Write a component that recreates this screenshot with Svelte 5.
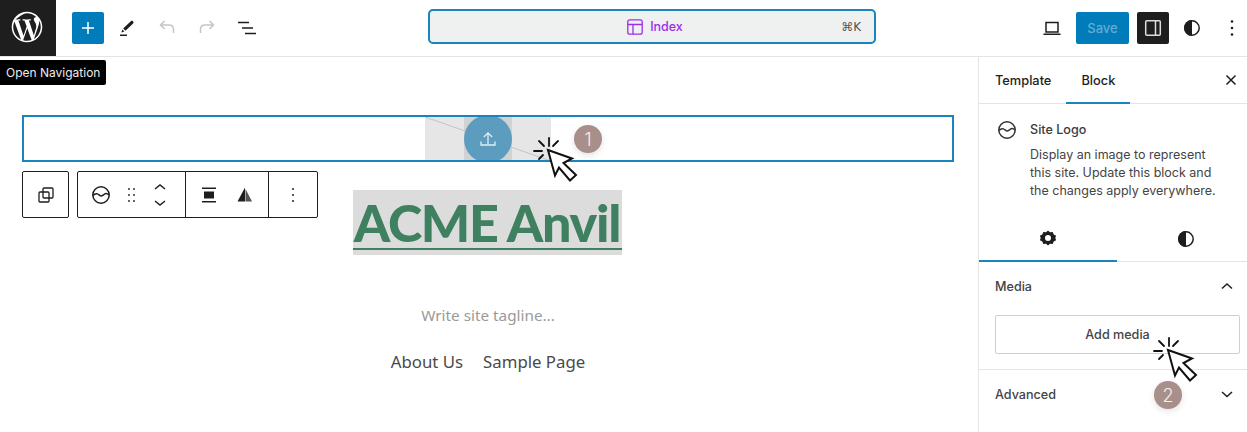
<script lang="ts">
  const tagline = 'Write site tagline...'
  const navLinks = ['About Us', 'Sample Page']
  const description = 'Display an image to represent this site. Update this block and the changes apply everywhere.'
</script>

{#snippet logoIcon()}
  <svg width="24" height="24" viewBox="0 0 24 24" fill="none" stroke="currentColor" stroke-width="1.5">
    <circle cx="12" cy="12" r="8.2" />
    <path d="M4 12.5c1.6-1.6 3-2.2 4.4-1.6 1.6.7 2.4 2 4 2 1.500 0 2.600-1.600 3.800-2.200 1.200-.5 2.400 0 3.800 1.300" />
  </svg>
{/snippet}

{#snippet halfCircle(size)}
  <svg width={size} height={size} viewBox="0 0 24 24">
    <circle cx="12" cy="12" r="7.2" fill="none" stroke="currentColor" stroke-width="1.5" />
    <path d="M12 4a8 8 0 0 0 0 16z" fill="currentColor" />
  </svg>
{/snippet}

{#snippet cursor(cls)}
  <svg class="cursor {cls}" width="48" height="52" viewBox="-16 -14 48 52" fill="none">
    <g stroke="#111" stroke-width="1.8" stroke-linecap="round">
      <path d="M1 -12v8M-9 -9l5 5M-14 1h8M-9 9l4-4M10 -9l-5 5" />
    </g>
    <path d="M0 0L24 8.500L15.500 13L28 25L22 30.500L11 17.500L7 25.500Z" fill="#fff" stroke="#111" stroke-width="2" stroke-linejoin="miter" />
  </svg>
{/snippet}

<div class="app">
  <header class="topbar">
    <div class="left">
      <div class="wp-logo">
        <svg width="36" height="36" viewBox="0 0 80 80">
          <path fill="#fff" d="M40 6C21.300 6 6 21.300 6 40s15.300 34 34 34 34-15.300 34-34S58.700 6 40 6zM9.400 40c0-4.400 1-8.700 2.700-12.500l14.600 40C16.500 62.500 9.400 52.100 9.400 40zM40 70.600c-3 0-5.900-.4-8.600-1.200l9.200-26.700 9.400 25.800c.1.100.1.300.2.400-3.200 1.100-6.600 1.700-10.200 1.700zm4.200-44.900c1.800-.1 3.500-.3 3.500-.3 1.700-.2 1.500-2.600-.2-2.500 0 0-5 .4-8.200.4-3 0-8.100-.4-8.100-.4-1.700-.1-1.900 2.400-.2 2.500 0 0 1.600.2 3.300.3l4.900 13.400-6.900 20.600-11.400-34c1.800-.1 3.500-.3 3.500-.3 1.700-.2 1.500-2.600-.2-2.500 0 0-5 .4-8.200.4h-2C24 16.900 31.500 9.400 40 9.400c8 0 15.300 3.100 20.700 8.100h-.4c-3 0-5.200 2.600-5.200 5.500 0 2.500 1.500 4.700 3 7.200 1.200 2 2.500 4.700 2.500 8.500 0 2.600-1 5.700-2.300 9.900l-3 10.100zm11.200 40.800l9.300-27c1.700-4.300 2.300-7.800 2.300-10.900 0-1.100-.1-2.100-.2-3.100 2.400 4.300 3.700 9.300 3.700 14.500 0 11.300-6.100 21.100-15.100 26.500z" />
        </svg>
      </div>
      <button class="inserter" aria-label="Add block">
        <svg width="24" height="24" viewBox="0 0 24 24" fill="none" stroke="#fff" stroke-width="1.500"><path d="M12 6v12M6 12h12" /></svg>
      </button>
      <div class="tools">
        <svg class="tool" width="24" height="24" viewBox="0 0 24 24"><path fill="#1e1e1e" d="M10.500 14.800l-2.300-2.300 7.600-7.300c.6-.6 1.500-.6 2.100 0l.2.200c.6.600.6 1.500 0 2.100l-7.600 7.300zM7.400 13.500l2 2-3 .9zM5 18.500h7V20H5z" /></svg>
        <svg class="tool muted" width="24" height="24" viewBox="0 0 24 24" fill="none" stroke="#c5c5c5" stroke-width="1.500"><path d="M9.500 5L5.500 9l4 4M5.500 9h8.500c2.700 0 4.500 1.800 4.500 4.500V17" /></svg>
        <svg class="tool muted" width="24" height="24" viewBox="0 0 24 24" fill="none" stroke="#c5c5c5" stroke-width="1.500"><path d="M14.500 5l4 4-4 4M18.500 9H10c-2.700 0-4.500 1.800-4.500 4.500V17" /></svg>
        <svg class="tool" width="24" height="24" viewBox="0 0 24 24" fill="none" stroke="#1e1e1e" stroke-width="1.500"><path d="M3 6.500h11M7 12h11M10 17.500h11" /></svg>
      </div>
    </div>

    <div class="command-bar">
      <div class="doc-title">
        <svg width="20" height="20" viewBox="0 0 20 20" fill="none" stroke="#9b2fe8" stroke-width="1.300">
          <rect x="2.800" y="2.800" width="14.400" height="14.400" rx="2" />
          <path d="M2.800 7.500h14.400M8 7.500v9.700" />
        </svg>
        <span>Index</span>
      </div>
      <span class="shortcut">⌘K</span>
    </div>

    <div class="right">
      <svg class="view" width="24" height="24" viewBox="0 0 24 24" fill="none" stroke="#1e1e1e" stroke-width="1.500"><path d="M6 6.500h12v9.500H6zM3.500 18.200h17" /></svg>
      <button class="save">Save</button>
      <button class="panel-toggle" aria-label="Settings">
        <svg width="24" height="24" viewBox="0 0 24 24" fill="none" stroke="#ddd" stroke-width="1.500"><rect x="4.700" y="4.700" width="14.600" height="14.600" rx="1" /><path d="M14.500 5v14" /></svg>
      </button>
      <div class="styles-icon">{@render halfCircle(24)}</div>
      <svg class="more" width="24" height="24" viewBox="0 0 24 24" fill="#1e1e1e"><circle cx="12" cy="5.500" r="1.300" /><circle cx="12" cy="12" r="1.300" /><circle cx="12" cy="18.500" r="1.300" /></svg>
    </div>
  </header>

  <div class="tooltip">Open Navigation</div>

  <div class="body">
    <main class="canvas">
      <div class="logo-block">
        <div class="placeholder">
          <svg class="diagonal" width="126" height="44" viewBox="0 0 126 44"><path d="M0 0L126 44" stroke="#c4c4c4" stroke-width="1" /></svg>
          <div class="placeholder-mid"></div>
          <div class="upload">
            <svg width="24" height="24" viewBox="0 0 24 24" fill="none" stroke="#e4eef3" stroke-width="1.300"><path d="M12 17V6M7.800 10L12 5.800 16.200 10M5 14.500v3.500h14v-3.500" /></svg>
          </div>
        </div>
      </div>

      <div class="site-title"><span>ACME Anvil</span></div>
      <p class="tagline">{tagline}</p>
      <nav class="site-nav">
        {#each navLinks as link}
          <span>{link}</span>
        {/each}
      </nav>

      <div class="block-toolbar">
        <div class="tb-group single">
          <svg width="24" height="24" viewBox="0 0 24 24" fill="none" stroke="#1e1e1e" stroke-width="1.300"><rect x="9" y="5" width="10" height="10" rx="1" /><rect x="5" y="9" width="10" height="10" rx="1" /></svg>
        </div>
        <div class="tb-group">
          <div class="tb-section first">
            <span class="tb-logo">{@render logoIcon()}</span>
            <svg width="24" height="24" viewBox="0 0 24 24" fill="#333"><circle cx="10" cy="6" r="1" /><circle cx="15" cy="6" r="1" /><circle cx="10" cy="12" r="1" /><circle cx="15" cy="12" r="1" /><circle cx="10" cy="18" r="1" /><circle cx="15" cy="18" r="1" /></svg>
            <svg class="mover" width="24" height="36" viewBox="0 0 24 36" fill="none" stroke="#1e1e1e" stroke-width="1.500"><path d="M7 12l5-4 5 4M7 24l5 4 5-4" /></svg>
          </div>
          <div class="tb-section second">
            <svg width="24" height="24" viewBox="0 0 24 24" fill="#1e1e1e"><path d="M5 4.500h14V6H5zM5 18h14v1.500H5zM7 8.500h10v7H7z" /></svg>
            <svg width="24" height="24" viewBox="0 0 24 24"><path d="M12 4.500L4.500 18.500H12z" fill="#1e1e1e" /><path d="M12.500 6l6.500 12.500h-6.500z" fill="#555" /></svg>
          </div>
          <div class="tb-section third">
            <svg width="24" height="24" viewBox="0 0 24 24" fill="#333"><circle cx="12" cy="6" r="1.100" /><circle cx="12" cy="12" r="1.100" /><circle cx="12" cy="18" r="1.100" /></svg>
          </div>
        </div>
      </div>
    </main>

    <aside class="sidebar">
      <div class="tabs">
        <span class="tab">Template</span>
        <span class="tab active">Block</span>
        <svg class="close" width="20" height="20" viewBox="0 0 20 20" fill="none" stroke="#1e1e1e" stroke-width="1.500"><path d="M5.500 5.500l9 9M14.500 5.500l-9 9" /></svg>
      </div>

      <div class="block-card">
        <span class="card-icon">{@render logoIcon()}</span>
        <div>
          <h2>Site Logo</h2>
          <p>{description}</p>
        </div>
      </div>

      <div class="inspector-tabs">
        <div class="itab active">
          <svg width="24" height="24" viewBox="0 0 24 24"><path fill="#1e1e1e" fill-rule="evenodd" d="M12 4.500l2 1.800 2.700-.4 1 2.500 2.400 1.300-.8 2.300.8 2.300-2.400 1.300-1 2.500-2.700-.4-2 1.800-2-1.800-2.700.4-1-2.500-2.400-1.300.8-2.300-.8-2.300 2.400-1.300 1-2.500 2.700.4zM12 9a3 3 0 1 0 0 6 3 3 0 0 0 0-6z" /></svg>
        </div>
        <div class="itab second">{@render halfCircle(24)}</div>
      </div>

      <section class="panel media">
        <div class="panel-head">
          <span>Media</span>
          <svg width="24" height="24" viewBox="0 0 24 24" fill="none" stroke="#1e1e1e" stroke-width="1.500"><path d="M7 14.500l5-4.500 5 4.500" /></svg>
        </div>
        <button class="add-media">Add media</button>
      </section>

      <section class="panel">
        <div class="panel-head">
          <span>Advanced</span>
          <svg width="24" height="24" viewBox="0 0 24 24" fill="none" stroke="#1e1e1e" stroke-width="1.500"><path d="M7 10l5 4.500 5-4.500" /></svg>
        </div>
      </section>
    </aside>
  </div>

  {@render cursor('c1')}
  {@render cursor('c2')}
  <div class="badge b1">1</div>
  <div class="badge b2">2</div>
</div>

<style>
  :global(body) {
    margin: 0;
    background: #fff;
  }

  .app {
    position: relative;
    display: flex;
    flex-direction: column;
    width: 1247px;
    height: 432px;
    overflow: hidden;
    font-family: Inter, "Liberation Sans", sans-serif;
    color: #1e1e1e;
    background: #fff;
  }

  button {
    font-family: inherit;
    padding: 0;
  }

  svg {
    display: block;
    flex-shrink: 0;
  }

  /* top bar */
  .topbar {
    display: grid;
    grid-template-columns: 428px 448px 1fr;
    height: 56px;
    flex-shrink: 0;
    border-bottom: 1px solid #e4e4e4;
  }

  .left {
    display: flex;
    align-items: center;
  }

  .wp-logo {
    display: flex;
    align-items: center;
    justify-content: center;
    box-sizing: border-box;
    width: 56px;
    height: 56px;
    padding: 0 2px 2px 0;
    background: #1e1e1e;
    margin-right: 16px;
  }

  .inserter {
    display: flex;
    align-items: center;
    justify-content: center;
    width: 32px;
    height: 32px;
    border: 0;
    border-radius: 2px;
    background: #007cba;
  }

  .tools {
    display: flex;
    gap: 16px;
    margin-left: 11px;
  }

  .command-bar {
    position: relative;
    display: flex;
    align-items: center;
    justify-content: center;
    height: 31px;
    margin-top: 9px;
    border: 2px solid #1a84bf;
    border-radius: 5px;
    background: #eff0f0;
    width: 444px;
  }

  .doc-title {
    display: flex;
    align-items: center;
    gap: 5px;
    margin-left: 4px;
    font-size: 12.500px;
    font-weight: 500;
    color: #9b2fe8;
  }

  .shortcut {
    position: absolute;
    right: 0;
    margin-right: 13px;
    font-size: 12px;
    font-weight: 500;
    color: #555;
    font-family: "DejaVu Sans", Inter, sans-serif;
  }

  .right {
    display: flex;
    align-items: center;
    justify-content: flex-end;
  }

  .view {
    margin-right: 12px;
  }

  .save {
    width: 53px;
    height: 32px;
    border: 0;
    border-radius: 2px;
    background: #007cba;
    color: #64acd3;
    font-size: 13px;
    font-weight: 500;
    margin-right: 8px;
  }

  .panel-toggle {
    display: flex;
    align-items: center;
    justify-content: center;
    width: 32px;
    height: 32px;
    border: 0;
    border-radius: 2px;
    background: #1e1e1e;
    margin-right: 11px;
  }

  .styles-icon {
    margin-right: 16px;
  }

  .more {
    margin-right: 3px;
  }

  .tooltip {
    position: absolute;
    left: 0;
    top: 60px;
    width: 106px;
    height: 25px;
    box-sizing: border-box;
    padding-left: 6px;
    line-height: 25px;
    background: #000;
    color: #ececec;
    font-size: 12px;
    border-radius: 0 2px 2px 0;
    white-space: nowrap;
  }

  /* canvas */
  .body {
    display: flex;
    flex: 1;
    min-height: 0;
  }

  .canvas {
    position: relative;
    flex: 1;
    min-width: 0;
    padding-top: 58px;
    padding-right: 2px;
  }

  .logo-block {
    display: flex;
    justify-content: center;
    width: 928px;
    height: 43px;
    margin-left: 22px;
    border: 2px solid #1a84bf;
    overflow: hidden;
  }

  .placeholder {
    position: relative;
    display: flex;
    justify-content: center;
    width: 126px;
    height: 44px;
    background: #e6e6e6;
  }

  .diagonal {
    position: absolute;
    left: 0;
    top: 0;
  }

  .placeholder-mid {
    width: 48px;
    background: #d2d2d2;
  }

  .upload {
    position: absolute;
    left: 39px;
    top: -2px;
    display: flex;
    align-items: center;
    justify-content: center;
    width: 48px;
    height: 48px;
    border-radius: 50%;
    background: #5b9cbf;
  }

  .site-title {
    display: flex;
    justify-content: center;
    margin: 28px 0 0 -2px;
    font-family: Lato, "Noto Sans", sans-serif;
  }

  .site-title span {
    display: block;
    box-sizing: border-box;
    width: 269px;
    height: 65px;
    background: #dcdcdc;
    color: #3f8060;
    font-size: 52px;
    font-weight: 900;
    line-height: 64px;
    letter-spacing: -1.3px;
    text-align: center;
    white-space: nowrap;
    background-image: linear-gradient(#3f8060, #3f8060);
    background-size: 100% 2px;
    background-position: 0 58px;
    background-repeat: no-repeat;
  }

  .tagline {
    margin: 50px 0 0;
    text-align: center;
    font-family: "Noto Sans", "Open Sans", sans-serif;
    font-size: 15.300px;
    line-height: 20px;
    color: #9a9a9a;
  }

  .site-nav {
    display: flex;
    justify-content: center;
    gap: 20px;
    margin-top: 25px;
    font-family: "Noto Sans", "Open Sans", sans-serif;
    font-size: 16.800px;
    line-height: 24px;
    color: #4a4a4a;
  }

  .block-toolbar {
    position: absolute;
    left: 22px;
    top: 114px;
    display: flex;
    gap: 8px;
  }

  .tb-group {
    display: flex;
    height: 45px;
    border: 1px solid #1e1e1e;
    border-radius: 2px;
    background: #fff;
  }

  .tb-group.single {
    align-items: center;
    justify-content: center;
    width: 45px;
  }

  .tb-section {
    display: flex;
    align-items: center;
  }

  .tb-section + .tb-section {
    border-left: 1px solid #1e1e1e;
  }

  .tb-section.first {
    width: 107px;
  }

  .tb-logo {
    margin-left: 11px;
    margin-right: 6px;
  }

  .mover {
    margin-left: 5px;
  }

  .tb-section.second {
    width: 83px;
    gap: 12px;
    padding-left: 11px;
    box-sizing: border-box;
  }

  .tb-section.third {
    width: 48px;
    justify-content: center;
  }

  /* sidebar */
  .sidebar {
    width: 268px;
    flex-shrink: 0;
    border-left: 1px solid #e4e4e4;
    font-size: 12.600px;
  }

  .tabs {
    display: flex;
    align-items: stretch;
    height: 46px;
    border-bottom: 1px solid #e4e4e4;
    position: relative;
  }

  .tab {
    display: flex;
    align-items: center;
    padding: 0 15px 0 16px;
    font-weight: 500;
    font-size: 12.800px;
    margin-bottom: -1px;
    box-sizing: border-box;
  }

  .tab.active {
    border-bottom: 2px solid #1a84bf;
    padding: 2px 15px 0;
  }

  .close {
    margin: 13px 6px 0 auto;
  }

  .block-card {
    display: flex;
    gap: 11px;
    padding: 14px 15px 0 16px;
    height: 110px;
    box-sizing: border-box;
    color: #3c3c3c;
  }

  .card-icon {
    color: #333;
  }

  .block-card h2 {
    margin: 4px 0 8px;
    font-size: 12.600px;
    line-height: 16px;
    font-weight: 500;
  }

  .block-card p {
    margin: 0;
    max-width: 196px;
    font-size: 12.500px;
    line-height: 18px;
    color: #444;
  }

  .inspector-tabs {
    display: flex;
    height: 47px;
    border-bottom: 1px solid #e4e4e4;
  }

  .itab {
    display: flex;
    flex: 1;
    align-items: center;
    justify-content: center;
    margin-bottom: -1px;
    padding-top: 2px;
  }

  .itab.active {
    flex: none;
    width: 138px;
    border-bottom: 2px solid #1a84bf;
  }

  .itab.second {
    padding-left: 8px;
  }

  .panel {
    padding: 0 8px 0 16px;
  }

  .panel.media {
    height: 108px;
    border-bottom: 1px solid #e4e4e4;
    box-sizing: border-box;
  }

  .panel-head {
    display: flex;
    align-items: center;
    justify-content: space-between;
    height: 48px;
    font-weight: 500;
    color: #444;
  }

  .add-media {
    display: block;
    width: 245px;
    height: 39px;
    margin-top: 5px;
    background: #fff;
    border: 1px solid #cfcfcf;
    border-radius: 2px;
    color: #444;
    font-size: 12.600px;
    font-weight: 500;
  }

  /* tutorial markers */
  .cursor {
    position: absolute;
  }

  :global(.cursor.c1) {
    left: 532px;
    top: 136px;
  }

  :global(.cursor.c2) {
    left: 1152px;
    top: 336px;
  }

  .badge {
    position: absolute;
    display: flex;
    align-items: center;
    justify-content: center;
    width: 28px;
    height: 28px;
    border-radius: 50%;
    background: #a88f8a;
    color: #f4efee;
    font-size: 18px;
    font-weight: 300;
    box-shadow: 0 2px 6px rgba(0, 0, 0, 0.12);
  }

  .b1 {
    left: 574px;
    top: 125px;
  }

  .b2 {
    left: 1154px;
    top: 381px;
  }
</style>
